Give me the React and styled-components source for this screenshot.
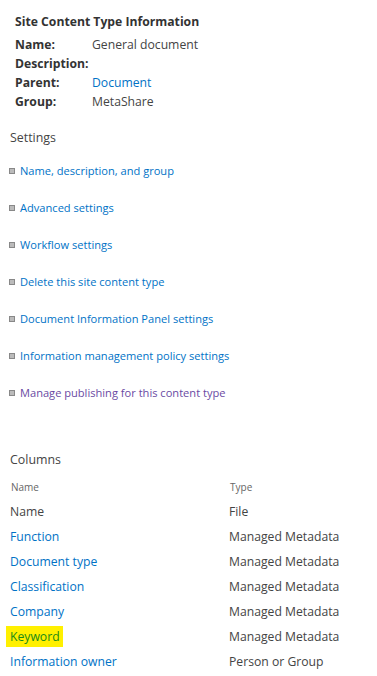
import React from "react";
import styled, { createGlobalStyle } from "styled-components";

const Global = createGlobalStyle`
  html, body {
    margin: 0;
    padding: 0;
    background: #fff;
  }
  body {
    font-family: "Open Sans", "Noto Sans", sans-serif;
    color: #444;
  }
`;

const info = [
  { label: "Name:", value: "General document" },
  { label: "Description:", value: "" },
  { label: "Parent:", value: "Document", link: true },
  { label: "Group:", value: "MetaShare" },
];

const settings = [
  "Name, description, and group",
  "Advanced settings",
  "Workflow settings",
  "Delete this site content type",
  "Document Information Panel settings",
  "Information management policy settings",
  { text: "Manage publishing for this content type", visited: true },
];

const columns = [
  { name: "Name", type: "File", plain: true },
  { name: "Function", type: "Managed Metadata" },
  { name: "Document type", type: "Managed Metadata" },
  { name: "Classification", type: "Managed Metadata" },
  { name: "Company", type: "Managed Metadata" },
  { name: "Keyword", type: "Managed Metadata", marked: true },
  { name: "Information owner", type: "Person or Group" },
];

const App = () => {
  return (
    <>
      <Global />
      <Page>
        <InfoBlock>
          <InfoTitle>Site Content Type Information</InfoTitle>
          {info.map((row) => (
            <InfoRow key={row.label}>
              <InfoLabel>{row.label}</InfoLabel>
              <InfoValue $link={row.link}>{row.value}</InfoValue>
            </InfoRow>
          ))}
        </InfoBlock>

        <SectionTitle>Settings</SectionTitle>
        <SettingsList>
          {settings.map((item) => {
            const text = typeof item === "string" ? item : item.text;
            const visited = typeof item !== "string" && item.visited;
            return (
              <SettingItem key={text}>
                <Bullet />
                <LinkText $visited={visited}>{text}</LinkText>
              </SettingItem>
            );
          })}
        </SettingsList>

        <ColumnsTitle>Columns</ColumnsTitle>
        <ColumnsTable>
          <HeadRow>
            <HeadCell>Name</HeadCell>
            <HeadCell>Type</HeadCell>
          </HeadRow>
          {columns.map((col) => (
            <ColRow key={col.name}>
              <NameCell $plain={col.plain} $marked={col.marked}>
                {col.name}
              </NameCell>
              <TypeCell>{col.type}</TypeCell>
            </ColRow>
          ))}
        </ColumnsTable>
      </Page>
    </>
  );
};

export default App;

const Page = styled.div`
  width: 377px;
  height: 676px;
  overflow: hidden;
  padding: 12px 0 0 10px;
  box-sizing: border-box;
  font-size: 12.2px;
`;

const InfoBlock = styled.div`
  padding-left: 5px;
  display: flex;
  flex-direction: column;
`;

const InfoTitle = styled.div`
  font-weight: 700;
  font-size: 12.2px;
  color: #333;
  line-height: 19px;
  margin-bottom: 4px;
`;

const InfoRow = styled.div`
  display: grid;
  grid-template-columns: 77px 1fr;
  line-height: 19px;
  height: 19px;
`;

const InfoLabel = styled.span`
  font-weight: 700;
  color: #333;
`;

const InfoValue = styled.span`
  color: ${(p) => (p.$link ? "#0072c6" : "#444")};
`;

const SectionTitle = styled.div`
  margin-top: 17px;
  font-size: 12.4px;
  line-height: 19px;
  color: #444;
`;

const SettingsList = styled.ul`
  list-style: none;
  margin: 14px 0 0 -1px;
  padding: 0;
  display: flex;
  flex-direction: column;
  gap: 18px;
`;

const SettingItem = styled.li`
  display: flex;
  align-items: center;
  gap: 5px;
  line-height: 19px;
  height: 19px;
  font-size: 11.1px;
`;

const Bullet = styled.span`
  width: 4px;
  height: 4px;
  border: 1px solid #888;
  background: #bbb;
  flex-shrink: 0;
`;

const LinkText = styled.span`
  color: ${(p) => (p.$visited ? "#6a4aa3" : "#0072c6")};
`;

const ColumnsTitle = styled.div`
  margin-top: 48px;
  font-size: 12.4px;
  line-height: 19px;
  color: #444;
`;

const ColumnsTable = styled.div`
  margin-top: 6px;
  display: flex;
  flex-direction: column;
`;

const HeadRow = styled.div`
  display: grid;
  grid-template-columns: 219px 1fr;
  height: 24px;
  align-items: center;
  padding-left: 1px;
`;

const HeadCell = styled.span`
  font-size: 10px;
  color: #666;
`;

const ColRow = styled.div`
  display: grid;
  grid-template-columns: 219px 1fr;
  height: 25px;
  align-items: center;
`;

const NameCell = styled.span`
  justify-self: start;
  color: ${(p) => (p.$plain ? "#444" : p.$marked ? "#188a18" : "#0072c6")};
  background: ${(p) => (p.$marked ? "#fff000" : "transparent")};
  padding: ${(p) => (p.$marked ? "2px 3px 2px 4px" : "0")};
  margin-left: ${(p) => (p.$marked ? "-4px" : "0")};
  line-height: 17px;
`;

const TypeCell = styled.span`
  color: #444;
`;
